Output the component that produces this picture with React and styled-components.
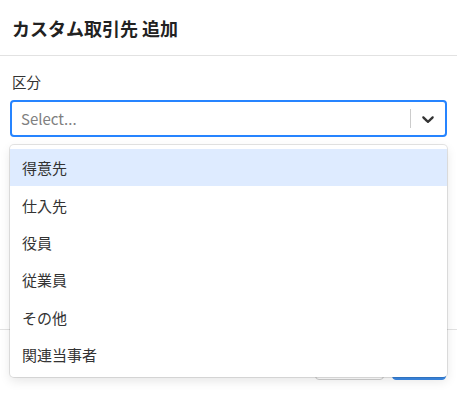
import styled, { createGlobalStyle } from "styled-components";

const GlobalStyle = createGlobalStyle`
  body {
    margin: 0;
    background: #fff;
    font-family: "Noto Sans CJK JP", "Noto Sans", sans-serif;
    color: #333;
  }
`;

const Modal = styled.div`
  width: 457px;
  height: 406px;
  display: flex;
  flex-direction: column;
  overflow: hidden;
`;

const Header = styled.header`
  height: 56px;
  display: flex;
  align-items: center;
  padding: 0 12px;
  border-bottom: 1px solid #e2e2e2;
  box-sizing: border-box;
`;

const Title = styled.h2`
  margin: 0;
  font-size: 18px;
  font-weight: 700;
  color: #222;
`;

const Body = styled.div`
  height: 273px;
  box-sizing: border-box;
  padding: 16px 10px 0;
`;

const Label = styled.div`
  font-size: 14.5px;
  line-height: 20px;
  padding-left: 2px;
  margin-bottom: 8px;
  color: #333;
`;

const Field = styled.div`
  position: relative;
`;

const Control = styled.div`
  height: 37px;
  box-sizing: border-box;
  border: 2px solid #2684ff;
  border-radius: 4px;
  display: flex;
  align-items: center;
`;

const Placeholder = styled.div`
  flex: 1;
  padding-left: 9px;
  font-size: 15px;
  color: #808080;
`;

const Separator = styled.span`
  width: 1px;
  height: 19px;
  background: #ccc;
`;

const Indicator = styled.div`
  width: 34px;
  display: flex;
  justify-content: center;
  color: #333;
`;

const Menu = styled.div`
  position: absolute;
  top: 45px;
  left: 0;
  right: 0;
  background: #fff;
  border-radius: 4px;
  padding: 4px 0;
  box-shadow: 0 0 0 1px rgba(0, 0, 0, 0.1), 0 4px 11px rgba(0, 0, 0, 0.1);
  z-index: 2;
`;

const Option = styled.div`
  height: 37.4px;
  display: flex;
  align-items: center;
  padding-left: 12px;
  font-size: 15px;
  color: #333;
  background: ${(p) => (p.$focused ? "#deebff" : "transparent")};
`;

const Footer = styled.footer`
  border-top: 1px solid #e2e2e2;
  padding: 13px 11px 0;
  display: flex;
  justify-content: flex-end;
  gap: 8px;
`;

const Button = styled.button`
  height: 37px;
  width: ${(p) => (p.$primary ? "54px" : "69px")};
  padding: 0;
  white-space: nowrap;
  border-radius: 4px;
  border: 1px solid ${(p) => (p.$primary ? "#3b8ae6" : "#cfcfcf")};
  background: ${(p) => (p.$primary ? "#3b8ae6" : "#fff")};
  color: ${(p) => (p.$primary ? "#fff" : "#333")};
  font-family: inherit;
  font-size: 13px;
`;

const options = ["得意先", "仕入先", "役員", "従業員", "その他", "関連当事者"];

export default function App() {
  return (
    <>
      <GlobalStyle />
      <Modal>
        <Header>
          <Title>カスタム取引先 追加</Title>
        </Header>
        <Body>
          <Label>区分</Label>
          <Field>
            <Control>
              <Placeholder>Select...</Placeholder>
              <Separator />
              <Indicator>
                <svg width="20" height="20" viewBox="0 0 20 20" fill="currentColor">
                  <path d="M4.516 7.548c0.436-0.446 1.043-0.481 1.576 0l3.908 3.747 3.908-3.747c0.533-0.481 1.141-0.446 1.574 0 0.436 0.445 0.408 1.197 0 1.615-0.406 0.418-4.695 4.502-4.695 4.502-0.217 0.223-0.502 0.335-0.787 0.335s-0.57-0.112-0.789-0.335c0 0-4.287-4.084-4.695-4.502s-0.436-1.170 0-1.615z" />
                </svg>
              </Indicator>
            </Control>
            <Menu>
              {options.map((o, i) => (
                <Option key={o} $focused={i === 0}>
                  {o}
                </Option>
              ))}
            </Menu>
          </Field>
        </Body>
        <Footer>
          <Button>キャンセル</Button>
          <Button $primary>追加</Button>
        </Footer>
      </Modal>
    </>
  );
}
